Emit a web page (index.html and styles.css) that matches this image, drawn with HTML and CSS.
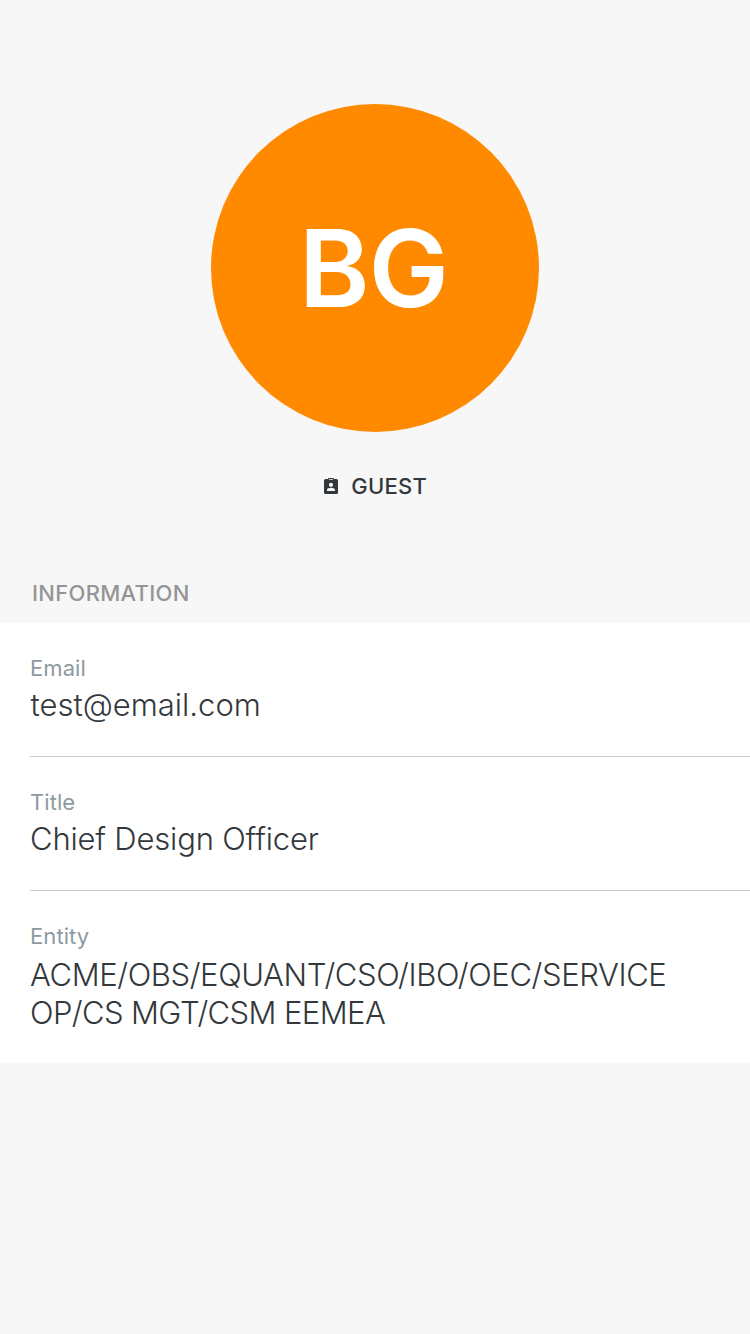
FILE: index.html
```html
<!DOCTYPE html>
<html lang="en">
<head>
<meta charset="utf-8">
<title>Profile</title>
<link rel="stylesheet" href="styles.css">
</head>
<body>
<main class="profile">
  <header class="hero">
    <div class="avatar"><span class="initials">BG</span></div>
    <div class="role">
      <svg class="badge-icon" viewBox="0 0 14 16"><path fill-rule="evenodd" d="M1.500 1H4a1 1 0 0 1 1-1h4a1 1 0 0 1 1 1h2.500A1.500 1.500 0 0 1 14 2.500v12a1.500 1.500 0 0 1-1.500 1.500h-11A1.500 1.500 0 0 1 0 14.500v-12A1.500 1.500 0 0 1 1.500 1zM5 1.200v.8h4v-.8zM7 4.700a2 2 0 1 0 0 4.200 2 2 0 0 0 0-4.200zM3 13h8v-1.300c0-1.200-2.500-1.900-4-1.900s-4 .7-4 1.900z"/></svg>
      <span class="role-text">GUEST</span>
    </div>
  </header>
  <h2 class="section-title">INFORMATION</h2>
  <dl class="fields">
    <div class="field"><dt class="label">Email</dt><dd class="value value-email">test@email.com</dd></div>
    <div class="field"><dt class="label">Title</dt><dd class="value">Chief Design Officer</dd></div>
    <div class="field field-entity"><dt class="label">Entity</dt><dd class="value value-multi">ACME/OBS/EQUANT/CSO/IBO/OEC/SERVICE<br><span class="entity-end">OP/CS MGT/CSM EEMEA</span></dd></div>
  </dl>
</main>
</body>
</html>
```
FILE: styles.css
```css
* { box-sizing: border-box; }
body { margin: 0; background: #f7f7f7; color: #33383c; font-family: Inter, "Liberation Sans", sans-serif; }
.profile { min-height: 1334px; }
.hero { height: 564px; padding-top: 104px; display: flex; flex-direction: column; align-items: center; }
.avatar { width: 328px; height: 328px; border-radius: 50%; background: #ff8a00; color: #fff; display: flex; align-items: center; justify-content: center; }
.initials { padding: 0 3px 1px 0; font-size: 107px; line-height: 128px; font-weight: 580; letter-spacing: -.8px; }
.role { margin-top: 40px; padding-left: 1px; height: 28px; display: flex; align-items: center; gap: 13.5px; }
.badge-icon { width: 14px; height: 16px; fill: #33383c; }
.role-text { font-size: 22px; line-height: 28px; font-weight: 550; letter-spacing: .3px; }
.section-title { margin: 0; height: 59px; padding: 15px 32px 0; font-size: 22px; line-height: 28px; font-weight: 550; color: #959595; letter-spacing: .3px; }
.fields { margin: 0; height: 440px; padding-left: 30px; background: #fff; }
.field { height: 134px; padding-top: 31px; border-bottom: 1px solid #c7cbcd; }
.field-entity { height: 172px; border: 0; }
.label { height: 28px; font-size: 22px; line-height: 28px; font-weight: 370; color: #8e9aa1; letter-spacing: .08px; }
.value { margin: 4px 0 0; font-size: 31px; line-height: 38px; font-weight: 300; letter-spacing: -.18px; white-space: nowrap; }
.value-email { padding-left: .5px; letter-spacing: 0; }
.value-multi { margin-top: 6px; line-height: 38px; letter-spacing: -.4px; }
.entity-end { letter-spacing: -.6px; }
```
